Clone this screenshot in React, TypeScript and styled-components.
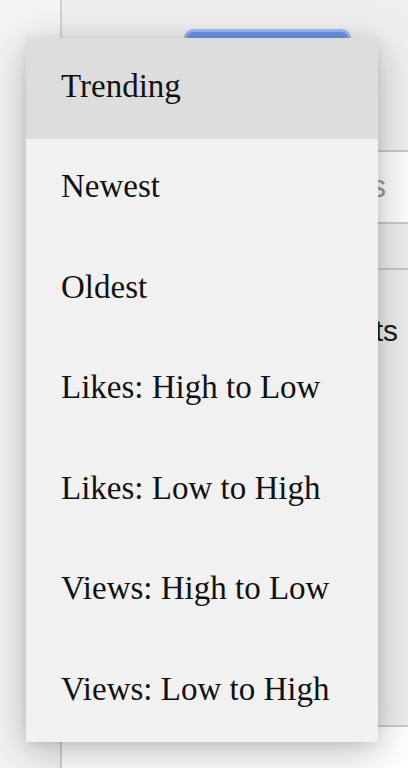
import React from 'react';
import styled, { createGlobalStyle } from 'styled-components';

const GlobalStyle = createGlobalStyle`
  html, body {
    margin: 0;
    padding: 0;
    background: #ffffff;
  }
  #root {
    width: 408px;
    height: 768px;
    overflow: hidden;
  }
`;

const Page = styled.div`
  position: relative;
  display: flex;
  width: 408px;
  height: 768px;
  overflow: hidden;
  font-family: "Liberation Sans", Arial, sans-serif;
`;

const Sidebar = styled.div`
  width: 60px;
  flex-shrink: 0;
  background: #f4f4f4;
  border-right: 2px solid #d2d2d2;
`;

const Main = styled.div`
  flex: 1;
  display: flex;
  flex-direction: column;
  background: #ededed;
`;

const Header = styled.div`
  height: 150px;
  padding: 29px 0 0 122px;
  box-sizing: border-box;
  background: #efefef;
`;

const SortButton = styled.div`
  width: 167px;
  height: 48px;
  box-sizing: border-box;
  border-radius: 9px;
  background: #6a95e6;
  border: 3px solid #9dbaf0;
`;

const SearchRow = styled.div`
  height: 70px;
  display: flex;
  align-items: center;
  justify-content: flex-end;
  padding-right: 22px;
  border-top: 2px solid #c9c9c9;
  border-bottom: 2px solid #c9c9c9;
  background: #fdfdfd;
  color: #999999;
  font-size: 31px;
`;

const Tabs = styled.div`
  height: 44px;
  border-bottom: 2px solid #c9c9c9;
  background: #ededed;
`;

const Content = styled.div`
  flex: 1;
  display: flex;
  flex-direction: column;
  background: #ededed;
`;

const Title = styled.div`
  height: 78px;
  display: flex;
  align-items: flex-end;
  justify-content: flex-end;
  padding-right: 10px;
  color: #1a1a1a;
  font-size: 30px;
`;

const Filler = styled.div`
  flex: 1;
`;

const Footer = styled.div`
  height: 41px;
  border-top: 2px solid #cbcbcb;
  background: #ffffff;
`;

const Menu = styled.ul`
  position: absolute;
  left: 26px;
  top: 38px;
  width: 352px;
  margin: 0;
  padding: 0;
  list-style: none;
  background: #f1f1f1;
  box-shadow: 0 10px 40px rgba(0, 0, 0, 0.26), 0 2px 10px rgba(0, 0, 0, 0.08);
`;

const Item = styled.li<{ $active?: boolean }>`
  height: 100.5px;
  box-sizing: border-box;
  display: flex;
  align-items: center;
  padding: 0 0 4px 35px;
  background: ${p => (p.$active ? '#dddddd' : 'transparent')};
  color: #111111;
  font-family: "Liberation Serif", "Times New Roman", serif;
  font-size: 33px;
`;

const options = [
  'Trending',
  'Newest',
  'Oldest',
  'Likes: High to Low',
  'Likes: Low to High',
  'Views: High to Low',
  'Views: Low to High',
];

export default function App() {
  return (
    <>
      <GlobalStyle />
      <Page>
        <Sidebar />
        <Main>
          <Header>
            <SortButton />
          </Header>
          <SearchRow>Search posts</SearchRow>
          <Tabs />
          <Content>
            <Title>Posts</Title>
            <Filler />
            <Footer />
          </Content>
        </Main>
        <Menu>
          {options.map((o, i) => (
            <Item key={o} $active={i === 0}>
              {o}
            </Item>
          ))}
        </Menu>
      </Page>
    </>
  );
}
